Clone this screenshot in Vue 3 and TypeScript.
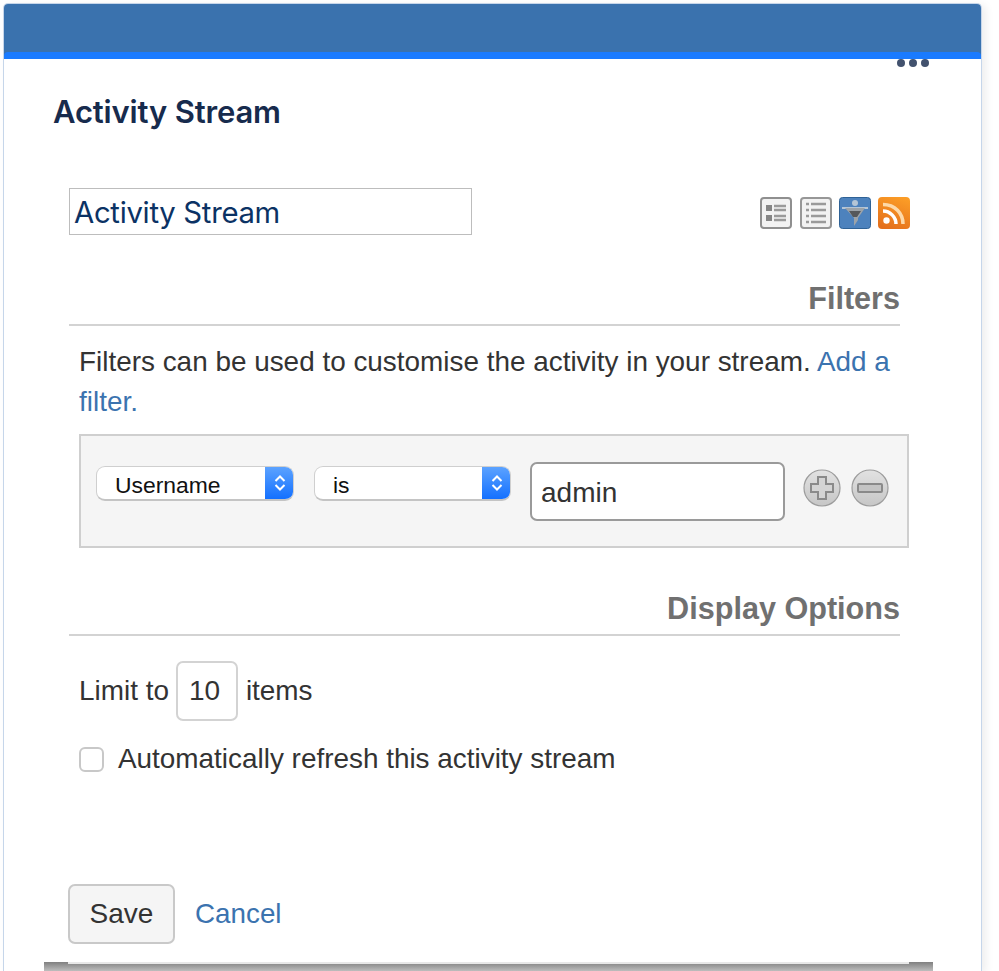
<template>
  <div class="page">
    <div class="gadget">
      <div class="g-head"><div class="g-strip"></div></div>
      <div class="dots"><i></i><i></i><i></i></div>
      <h1 class="g-title">Activity Stream</h1>

      <div class="g-body">
        <div class="title-row">
          <input class="title-input" value="Activity Stream" />
          <div class="views">
            <svg width="32" height="32" viewBox="0 0 32 32">
              <rect x="1" y="1" width="30" height="30" rx="3" fill="#f2f2f2" stroke="#8f8f8f" stroke-width="2"/>
              <rect x="6" y="8" width="6" height="6" fill="#858585"/><rect x="6" y="18" width="6" height="6" fill="#858585"/>
              <path d="M14 9h12M14 13h12M14 19h12M14 23h12" stroke="#9a9a9a" stroke-width="2.500"/>
            </svg>
            <svg class="ml8" width="32" height="32" viewBox="0 0 32 32">
              <rect x="1" y="1" width="30" height="30" rx="3" fill="#f2f2f2" stroke="#979797" stroke-width="2"/>
              <path d="M6 7h3M6 13h3M6 19h3M6 25h3" stroke="#9a9a9a" stroke-width="2.500"/>
              <path d="M11 7h15M11 13h15M11 19h15M11 25h15" stroke="#9a9a9a" stroke-width="2.500"/>
            </svg>
            <svg class="ml7" width="32" height="32" viewBox="0 0 32 32">
              <rect x="0.5" y="0.5" width="31" height="31" rx="3" fill="#4d82bd" stroke="#2f6296"/>
              <circle cx="16" cy="6" r="3" fill="#b4c5d6"/>
              <path d="M3 11h26" stroke="#b4c5d6" stroke-width="2"/>
              <path d="M6 11h20l-7 10v2l-4 6v-8z" fill="#9ca3a9"/>
              <path d="M10 14h12l-4 6h-4z" fill="#55585b"/>
            </svg>
            <svg class="ml7" width="32" height="32" viewBox="0 0 32 32">
              <defs><linearGradient id="rss" x1="0.7" y1="0" x2="0.3" y2="1"><stop offset="0" stop-color="#fb9c26"/><stop offset="1" stop-color="#e4701c"/></linearGradient></defs>
              <rect width="32" height="32" rx="4" fill="url(#rss)"/>
              <circle cx="8.5" cy="23.5" r="3.200" fill="#fff"/>
              <path d="M5 14c7 0 13 6 13 13" fill="none" stroke="#fff" stroke-width="3.500"/>
              <path d="M5 7.500c12 0 20 9 20 19.500" fill="none" stroke="#fdd9a8" stroke-width="3.500"/>
            </svg>
          </div>
        </div>

        <h2 class="sec filters-h">Filters</h2>
        <p class="help">Filters can be used to customise the activity in your stream. <a>Add a filter.</a></p>

        <div class="filter-box">
          <div class="sel sel-user">
            <span>Username</span>
            <b class="stepper"><svg width="14" height="24" viewBox="0 0 14 24"><path d="M2.500 10 7 5.500 11.500 10M2.500 14 7 18.500 11.500 14" fill="none" stroke="#fff" stroke-width="2"/></svg></b>
          </div>
          <div class="sel sel-is">
            <span>is</span>
            <b class="stepper"><svg width="14" height="24" viewBox="0 0 14 24"><path d="M2.500 10 7 5.500 11.500 10M2.500 14 7 18.500 11.500 14" fill="none" stroke="#fff" stroke-width="2"/></svg></b>
          </div>
          <input class="val" value="admin" />
          <svg class="round" width="38" height="38" viewBox="0 0 38 38">
            <defs><linearGradient id="rb" x1="0" y1="0" x2="0" y2="1"><stop offset="0" stop-color="#e2e2e2"/><stop offset="1" stop-color="#c6c6c6"/></linearGradient></defs>
            <circle cx="19" cy="19" r="18" fill="url(#rb)" stroke="#9c9c9c" stroke-width="1.200"/>
            <path d="M15 8h8v7h7v8h-7v7h-8v-7H8v-8h7z" fill="#d4d4d4" stroke="#8a8a8a" stroke-width="2"/>
          </svg>
          <svg class="round minus" width="38" height="38" viewBox="0 0 38 38">
            <circle cx="19" cy="19" r="18" fill="url(#rb)" stroke="#9c9c9c" stroke-width="1.200"/>
            <rect x="7" y="15" width="24" height="8" rx="1" fill="#c4c4c4" stroke="#8a8a8a" stroke-width="2"/>
          </svg>
        </div>

        <h2 class="sec display-h">Display Options</h2>
        <div class="limit">
          <span>Limit to</span>
          <input class="num" value="10" />
          <span>items</span>
        </div>
        <label class="refresh">
          <input type="checkbox" class="chk" />
          <span>Automatically refresh this activity stream</span>
        </label>

        <div class="actions">
          <button class="save">Save</button>
          <a class="cancel">Cancel</a>
        </div>
      </div>

      <div class="edge"></div>
    </div>
  </div>
</template>

<script setup lang="ts">
</script>

<style>
html, body { background: #fff; overflow: hidden; }
</style>

<style scoped>
.page { width: 999px; height: 971px; box-sizing: border-box; padding: 3px 0 0 3px; font-family: "Liberation Sans", Arial, sans-serif; color: #333; overflow: hidden; }
.gadget { position: relative; width: 979px; height: 968px; box-sizing: border-box; background: #fff; border: 1px solid #c6d6ea; border-bottom: none; border-radius: 5px 5px 0 0; box-shadow: 4px 2px 8px rgba(0,0,0,0.07); display: flex; flex-direction: column; }
.g-head { height: 55px; flex: none; background: #3a72ae; border-radius: 4px 4px 0 0; display: flex; align-items: flex-end; }
.g-strip { width: 100%; height: 7px; background: #1a7bff; border-radius: 4px 4px 0 0; }
.dots { position: absolute; left: 893px; top: 55px; display: flex; gap: 4px; }
.dots i { width: 8px; height: 8px; border-radius: 50%; background: #42526e; }
.g-title { margin: 35px 0 0 49px; font-size: 31px; line-height: 36px; font-weight: 600; color: #172b4d; font-family: Inter, "Liberation Sans", sans-serif; letter-spacing: -0.16px; }
.g-body { padding: 58px 0 0 65px; flex: 1; }
.title-row { display: flex; align-items: center; justify-content: space-between; width: 841px; }
.title-input { width: 403px; height: 47px; box-sizing: border-box; border: 1px solid #bdbdbd; padding: 2px 4px 0; font-size: 29.300px; font-family: Inter, "Liberation Sans", sans-serif; letter-spacing: -0.3px; color: #0b3264; outline: none; background: #fff; }
.views { display: flex; margin-top: 3px; }
.ml8 { margin-left: 8px; }
.ml7 { margin-left: 7px; }
.sec { width: 831px; box-sizing: border-box; margin: 0; border-bottom: 2px solid #d3d3d3; text-align: right; font-size: 30.600px; line-height: 34px; font-weight: 700; color: #707070; padding-bottom: 9px; }
.filters-h { margin-top: 46px; }
.help { width: 830px; margin: 16px 0 0 10px; font-size: 27.900px; line-height: 40px; color: #333; }
.help a, .cancel { color: #3b73af; }
.filter-box { width: 830px; height: 114px; box-sizing: border-box; margin: 12px 0 0 10px; background: #f5f5f5; border: 2px solid #cfcfcf; display: flex; align-items: flex-start; padding: 26px 0 0 15px; }
.sel { height: 35px; margin-top: 4px; box-sizing: border-box; background: #fff; border: 1px solid #cfcfcf; border-bottom: 2px solid #c4c4c4; border-radius: 9px; display: flex; align-items: center; justify-content: space-between; font-size: 22.900px; color: #111; overflow: hidden; }
.sel span { padding: 5px 0 0 18px; }
.sel-user { width: 198px; }
.sel-is { width: 197px; margin-left: 20px; }
.stepper { width: 29px; height: 35px; margin-right: -1px; background: linear-gradient(#5ea4ff, #0f6dff); display: flex; align-items: center; justify-content: center; }
.val { width: 255px; height: 59px; box-sizing: border-box; margin: 0 0 0 19px; border: 2px solid #9a9a9a; border-radius: 7px; padding: 2px 10px 0 9px; font-size: 28px; font-family: "Liberation Sans", sans-serif; color: #333; background: #fff; outline: none; }
.round { margin: 7px 0 0 18px; }
.minus { margin-left: 10px; }
.display-h { margin-top: 43px; }
.limit { display: flex; align-items: center; margin: 25px 0 0 10px; font-size: 27.900px; color: #333; }
.num { width: 62px; height: 60px; box-sizing: border-box; margin: 0 8px 0 7px; border: 2px solid #d3d3d3; border-radius: 7px; text-align: left; padding: 0 0 0 11px; font-size: 28px; font-family: "Liberation Sans", sans-serif; color: #333; outline: none; background: #fff; }
.refresh { display: flex; align-items: center; margin: 21px 0 0 10px; font-size: 27.900px; line-height: 34px; color: #333; }
.chk { appearance: none; width: 25px; height: 25px; margin: 0 14px 0 0; box-sizing: border-box; background: #fff; border: 2px solid #c8c8c8; border-radius: 6px; }
.actions { display: flex; align-items: center; margin: 108px 0 0 -1px; }
.save { width: 107px; height: 60px; box-sizing: border-box; background: #f5f5f5; border: 2px solid #c9c9c9; border-radius: 7px; font-size: 28px; font-family: "Liberation Sans", sans-serif; color: #333; padding: 0; }
.cancel { margin-left: 20px; font-size: 27.800px; }
.edge { position: absolute; left: 40px; top: 958px; width: 889px; height: 10px; background: linear-gradient(#808080, #c4c4c4); }
.edge::before { content: ""; position: absolute; left: 24px; right: 24px; top: 0; height: 2px; background: #e8e8e8; }
</style>
